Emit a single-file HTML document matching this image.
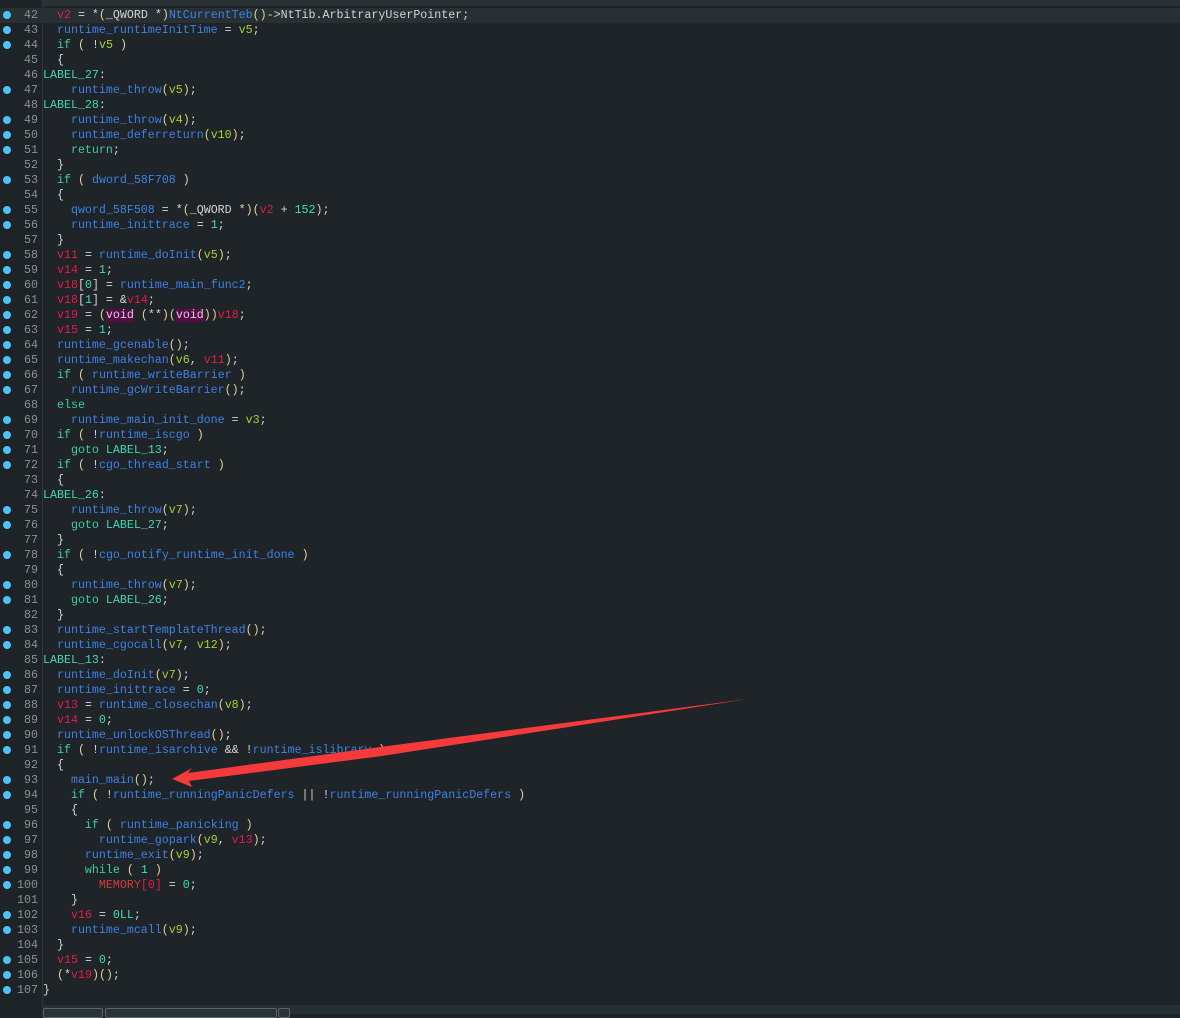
<!DOCTYPE html>
<html><head><meta charset="utf-8"><style>
html,body{margin:0;padding:0;}
body{width:1180px;height:1014px;background:#1e2427;position:relative;overflow:hidden;font-family:"Liberation Mono",monospace;font-size:11.65px;}
#top{position:absolute;left:0;top:0;width:1180px;height:6px;background:#2a3235;}
#gut{position:absolute;left:0;top:0;width:42px;height:1014px;background:#1d2326;border-right:1px solid #2d383b;}
#w{position:absolute;left:0;top:1px;width:1180px;height:1000px;}
.ln{position:absolute;left:0;height:15px;line-height:15px;width:1180px;white-space:pre;color:#d4d4d4;}
.ln .num{position:absolute;left:12px;width:26px;text-align:right;color:#8a9194;}
.ln .dot{position:absolute;left:3px;top:3px;width:8px;height:8px;border-radius:50%;background:#4cc3f5;}
.ln .c{position:absolute;left:43px;}
.cur{background:#283033;}
.k{color:#3fcca0}.f{color:#3d80e6}.r{color:#e8194a}.a{color:#a6d130}.n{color:#3fe0a8}.p{color:#e6cf9a}.l{color:#46d6b0}.m{color:#d43a3a}
.vd{background:#5a0a4a;}
#bot{position:absolute;left:42px;top:1005px;width:1138px;height:9px;background:#253033;}
.tab{position:absolute;top:1008px;height:8px;border:1px solid #5a6366;border-radius:2px;background:#2a3336;}
</style></head><body>
<div id="top"></div>
<div id="gut"></div>
<div id="w">
<div class="ln cur" style="top:7px"><span class="dot"></span><span class="num">42</span><span class="c">  <span class="r">v2</span> = *<span class="p">(</span>_QWORD *<span class="p">)</span><span class="f">NtCurrentTeb</span><span class="p">()</span>-&gt;NtTib.ArbitraryUserPointer;</span></div>
<div class="ln" style="top:22px"><span class="dot"></span><span class="num">43</span><span class="c">  <span class="f">runtime_runtimeInitTime</span> = <span class="a">v5</span>;</span></div>
<div class="ln" style="top:37px"><span class="dot"></span><span class="num">44</span><span class="c">  <span class="k">if</span> <span class="p">(</span> !<span class="a">v5</span> <span class="p">)</span></span></div>
<div class="ln" style="top:52px"><span class="num">45</span><span class="c">  {</span></div>
<div class="ln" style="top:67px"><span class="num">46</span><span class="c"><span class="l">LABEL_27</span>:</span></div>
<div class="ln" style="top:82px"><span class="dot"></span><span class="num">47</span><span class="c">    <span class="f">runtime_throw</span><span class="p">(</span><span class="a">v5</span><span class="p">)</span>;</span></div>
<div class="ln" style="top:97px"><span class="num">48</span><span class="c"><span class="l">LABEL_28</span>:</span></div>
<div class="ln" style="top:112px"><span class="dot"></span><span class="num">49</span><span class="c">    <span class="f">runtime_throw</span><span class="p">(</span><span class="a">v4</span><span class="p">)</span>;</span></div>
<div class="ln" style="top:127px"><span class="dot"></span><span class="num">50</span><span class="c">    <span class="f">runtime_deferreturn</span><span class="p">(</span><span class="a">v10</span><span class="p">)</span>;</span></div>
<div class="ln" style="top:142px"><span class="dot"></span><span class="num">51</span><span class="c">    <span class="k">return</span>;</span></div>
<div class="ln" style="top:157px"><span class="num">52</span><span class="c">  }</span></div>
<div class="ln" style="top:172px"><span class="dot"></span><span class="num">53</span><span class="c">  <span class="k">if</span> <span class="p">(</span> <span class="f">dword_58F708</span> <span class="p">)</span></span></div>
<div class="ln" style="top:187px"><span class="num">54</span><span class="c">  {</span></div>
<div class="ln" style="top:202px"><span class="dot"></span><span class="num">55</span><span class="c">    <span class="f">qword_58F508</span> = *<span class="p">(</span>_QWORD *<span class="p">)(</span><span class="r">v2</span> + <span class="n">152</span><span class="p">)</span>;</span></div>
<div class="ln" style="top:217px"><span class="dot"></span><span class="num">56</span><span class="c">    <span class="f">runtime_inittrace</span> = <span class="n">1</span>;</span></div>
<div class="ln" style="top:232px"><span class="num">57</span><span class="c">  }</span></div>
<div class="ln" style="top:247px"><span class="dot"></span><span class="num">58</span><span class="c">  <span class="r">v11</span> = <span class="f">runtime_doInit</span><span class="p">(</span><span class="a">v5</span><span class="p">)</span>;</span></div>
<div class="ln" style="top:262px"><span class="dot"></span><span class="num">59</span><span class="c">  <span class="r">v14</span> = <span class="n">1</span>;</span></div>
<div class="ln" style="top:277px"><span class="dot"></span><span class="num">60</span><span class="c">  <span class="r">v18</span>[<span class="n">0</span>] = <span class="f">runtime_main_func2</span>;</span></div>
<div class="ln" style="top:292px"><span class="dot"></span><span class="num">61</span><span class="c">  <span class="r">v18</span>[<span class="n">1</span>] = &amp;<span class="r">v14</span>;</span></div>
<div class="ln" style="top:307px"><span class="dot"></span><span class="num">62</span><span class="c">  <span class="r">v19</span> = <span class="p">(</span><span class="vd">void</span> <span class="p">(</span>**<span class="p">)(</span><span class="vd">void</span><span class="p">))</span><span class="r">v18</span>;</span></div>
<div class="ln" style="top:322px"><span class="dot"></span><span class="num">63</span><span class="c">  <span class="r">v15</span> = <span class="n">1</span>;</span></div>
<div class="ln" style="top:337px"><span class="dot"></span><span class="num">64</span><span class="c">  <span class="f">runtime_gcenable</span><span class="p">()</span>;</span></div>
<div class="ln" style="top:352px"><span class="dot"></span><span class="num">65</span><span class="c">  <span class="f">runtime_makechan</span><span class="p">(</span><span class="a">v6</span>, <span class="r">v11</span><span class="p">)</span>;</span></div>
<div class="ln" style="top:367px"><span class="dot"></span><span class="num">66</span><span class="c">  <span class="k">if</span> <span class="p">(</span> <span class="f">runtime_writeBarrier</span> <span class="p">)</span></span></div>
<div class="ln" style="top:382px"><span class="dot"></span><span class="num">67</span><span class="c">    <span class="f">runtime_gcWriteBarrier</span><span class="p">()</span>;</span></div>
<div class="ln" style="top:397px"><span class="num">68</span><span class="c">  <span class="k">else</span></span></div>
<div class="ln" style="top:412px"><span class="dot"></span><span class="num">69</span><span class="c">    <span class="f">runtime_main_init_done</span> = <span class="a">v3</span>;</span></div>
<div class="ln" style="top:427px"><span class="dot"></span><span class="num">70</span><span class="c">  <span class="k">if</span> <span class="p">(</span> !<span class="f">runtime_iscgo</span> <span class="p">)</span></span></div>
<div class="ln" style="top:442px"><span class="dot"></span><span class="num">71</span><span class="c">    <span class="k">goto</span> <span class="l">LABEL_13</span>;</span></div>
<div class="ln" style="top:457px"><span class="dot"></span><span class="num">72</span><span class="c">  <span class="k">if</span> <span class="p">(</span> !<span class="f">cgo_thread_start</span> <span class="p">)</span></span></div>
<div class="ln" style="top:472px"><span class="num">73</span><span class="c">  {</span></div>
<div class="ln" style="top:487px"><span class="num">74</span><span class="c"><span class="l">LABEL_26</span>:</span></div>
<div class="ln" style="top:502px"><span class="dot"></span><span class="num">75</span><span class="c">    <span class="f">runtime_throw</span><span class="p">(</span><span class="a">v7</span><span class="p">)</span>;</span></div>
<div class="ln" style="top:517px"><span class="dot"></span><span class="num">76</span><span class="c">    <span class="k">goto</span> <span class="l">LABEL_27</span>;</span></div>
<div class="ln" style="top:532px"><span class="num">77</span><span class="c">  }</span></div>
<div class="ln" style="top:547px"><span class="dot"></span><span class="num">78</span><span class="c">  <span class="k">if</span> <span class="p">(</span> !<span class="f">cgo_notify_runtime_init_done</span> <span class="p">)</span></span></div>
<div class="ln" style="top:562px"><span class="num">79</span><span class="c">  {</span></div>
<div class="ln" style="top:577px"><span class="dot"></span><span class="num">80</span><span class="c">    <span class="f">runtime_throw</span><span class="p">(</span><span class="a">v7</span><span class="p">)</span>;</span></div>
<div class="ln" style="top:592px"><span class="dot"></span><span class="num">81</span><span class="c">    <span class="k">goto</span> <span class="l">LABEL_26</span>;</span></div>
<div class="ln" style="top:607px"><span class="num">82</span><span class="c">  }</span></div>
<div class="ln" style="top:622px"><span class="dot"></span><span class="num">83</span><span class="c">  <span class="f">runtime_startTemplateThread</span><span class="p">()</span>;</span></div>
<div class="ln" style="top:637px"><span class="dot"></span><span class="num">84</span><span class="c">  <span class="f">runtime_cgocall</span><span class="p">(</span><span class="a">v7</span>, <span class="a">v12</span><span class="p">)</span>;</span></div>
<div class="ln" style="top:652px"><span class="num">85</span><span class="c"><span class="l">LABEL_13</span>:</span></div>
<div class="ln" style="top:667px"><span class="dot"></span><span class="num">86</span><span class="c">  <span class="f">runtime_doInit</span><span class="p">(</span><span class="a">v7</span><span class="p">)</span>;</span></div>
<div class="ln" style="top:682px"><span class="dot"></span><span class="num">87</span><span class="c">  <span class="f">runtime_inittrace</span> = <span class="n">0</span>;</span></div>
<div class="ln" style="top:697px"><span class="dot"></span><span class="num">88</span><span class="c">  <span class="r">v13</span> = <span class="f">runtime_closechan</span><span class="p">(</span><span class="a">v8</span><span class="p">)</span>;</span></div>
<div class="ln" style="top:712px"><span class="dot"></span><span class="num">89</span><span class="c">  <span class="r">v14</span> = <span class="n">0</span>;</span></div>
<div class="ln" style="top:727px"><span class="dot"></span><span class="num">90</span><span class="c">  <span class="f">runtime_unlockOSThread</span><span class="p">()</span>;</span></div>
<div class="ln" style="top:742px"><span class="dot"></span><span class="num">91</span><span class="c">  <span class="k">if</span> <span class="p">(</span> !<span class="f">runtime_isarchive</span> &amp;&amp; !<span class="f">runtime_islibrary</span> <span class="p">)</span></span></div>
<div class="ln" style="top:757px"><span class="num">92</span><span class="c">  {</span></div>
<div class="ln" style="top:772px"><span class="dot"></span><span class="num">93</span><span class="c">    <span class="f">main_main</span><span class="p">()</span>;</span></div>
<div class="ln" style="top:787px"><span class="dot"></span><span class="num">94</span><span class="c">    <span class="k">if</span> <span class="p">(</span> !<span class="f">runtime_runningPanicDefers</span> || !<span class="f">runtime_runningPanicDefers</span> <span class="p">)</span></span></div>
<div class="ln" style="top:802px"><span class="num">95</span><span class="c">    {</span></div>
<div class="ln" style="top:817px"><span class="dot"></span><span class="num">96</span><span class="c">      <span class="k">if</span> <span class="p">(</span> <span class="f">runtime_panicking</span> <span class="p">)</span></span></div>
<div class="ln" style="top:832px"><span class="dot"></span><span class="num">97</span><span class="c">        <span class="f">runtime_gopark</span><span class="p">(</span><span class="a">v9</span>, <span class="r">v13</span><span class="p">)</span>;</span></div>
<div class="ln" style="top:847px"><span class="dot"></span><span class="num">98</span><span class="c">      <span class="f">runtime_exit</span><span class="p">(</span><span class="a">v9</span><span class="p">)</span>;</span></div>
<div class="ln" style="top:862px"><span class="dot"></span><span class="num">99</span><span class="c">      <span class="k">while</span> <span class="p">(</span> <span class="n">1</span> <span class="p">)</span></span></div>
<div class="ln" style="top:877px"><span class="dot"></span><span class="num">100</span><span class="c">        <span class="m">MEMORY</span><span class="r">[</span><span class="r">0</span><span class="r">]</span> = <span class="n">0</span>;</span></div>
<div class="ln" style="top:892px"><span class="num">101</span><span class="c">    }</span></div>
<div class="ln" style="top:907px"><span class="dot"></span><span class="num">102</span><span class="c">    <span class="r">v16</span> = <span class="n">0LL</span>;</span></div>
<div class="ln" style="top:922px"><span class="dot"></span><span class="num">103</span><span class="c">    <span class="f">runtime_mcall</span><span class="p">(</span><span class="a">v9</span><span class="p">)</span>;</span></div>
<div class="ln" style="top:937px"><span class="num">104</span><span class="c">  }</span></div>
<div class="ln" style="top:952px"><span class="dot"></span><span class="num">105</span><span class="c">  <span class="r">v15</span> = <span class="n">0</span>;</span></div>
<div class="ln" style="top:967px"><span class="dot"></span><span class="num">106</span><span class="c">  <span class="p">(</span>*<span class="r">v19</span><span class="p">)()</span>;</span></div>
<div class="ln" style="top:982px"><span class="dot"></span><span class="num">107</span><span class="c">}</span></div>
</div>
<div id="bot"></div>
<div class="tab" style="left:43px;width:58px"></div>
<div class="tab" style="left:105px;width:170px"></div>
<div class="tab" style="left:278px;width:10px"></div>
<svg width="1180" height="1014" style="position:absolute;left:0;top:0">
<polygon points="748,699 380,747 188,773 192,768 172,779 192,787 189,781 382,756" fill="#f43a3a"/>
</svg>
</body></html>
